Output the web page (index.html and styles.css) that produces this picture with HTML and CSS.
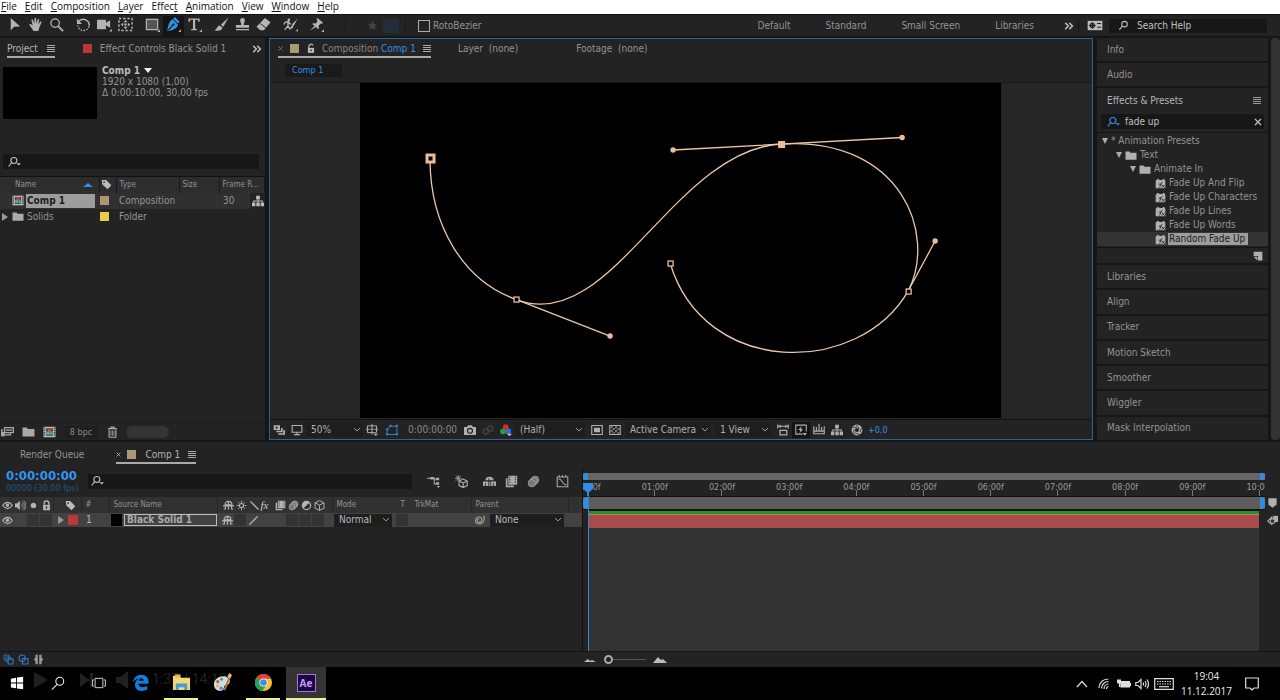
FILE: index.html
```html
<!DOCTYPE html>
<html lang="en">
<head>
<meta charset="utf-8">
<title>Compositor</title>
<link rel="stylesheet" href="styles.css">
</head>
<body>
<svg class="defs" aria-hidden="true">
  <symbol id="arrow" viewBox="0 0 16 16"><path d="M4 1v13.500l3.500-4 6.500-.3z" fill="currentColor"/></symbol>
  <symbol id="hand" viewBox="0 0 16 16"><path d="M6 15 1.500 8.500c-.5-1 1-1.500 1.800-.7L5 9.300 3.700 3.500c-.2-1.200 1.300-1.400 1.600-.3l1.400 4L7 1.800c0-1.200 1.700-1.200 1.700 0l.3 5.400 1.300-4.400c.4-1 1.800-.7 1.600.4L11 8l1.700-2.800c.7-.9 1.900-.2 1.500.8L12 11.500 11 15z" fill="currentColor"/></symbol>
  <symbol id="mag" viewBox="0 0 16 16"><circle cx="6.500" cy="6.500" r="4.500" fill="none" stroke="currentColor" stroke-width="1.400"/><path d="m10 10 5 5" stroke="currentColor" stroke-width="2"/></symbol>
  <symbol id="find" viewBox="0 0 16 16"><circle cx="9.500" cy="6" r="4" fill="none" stroke="currentColor" stroke-width="1.500"/><path d="m6.500 9-4.500 5" stroke="currentColor" stroke-width="1.600"/></symbol>
  <symbol id="findmenu" viewBox="0 0 18 16"><circle cx="7.500" cy="6" r="4" fill="none" stroke="currentColor" stroke-width="1.500"/><path d="m4.500 9-4 5" stroke="currentColor" stroke-width="1.600"/><path d="M11 9.500h6l-3 3z" fill="currentColor"/></symbol>
  <symbol id="rotate" viewBox="0 0 16 16"><path d="M3 4.500C8 0 15 4 14 9.500" fill="none" stroke="currentColor" stroke-width="1.600"/><path d="M14 10c-2 6-11 6-12-1" fill="none" stroke="currentColor" stroke-width="1.500" stroke-dasharray="1.600 1.500"/><path d="M1 1.500v6h5.500z" fill="currentColor"/></symbol>
  <symbol id="camera" viewBox="0 0 16 16"><path d="M0 3h9.500v3L14 3.500v8L9.500 9v4H0z" fill="currentColor"/><path d="M13 15.500h3v-3z" fill="currentColor"/></symbol>
  <symbol id="panbehind" viewBox="0 0 16 16"><rect x="1" y="1.500" width="14" height="13" fill="none" stroke="currentColor" stroke-width="1.600" stroke-dasharray="2.500 2"/><path d="m8 3 2 2.500H6zM8 13l2-2.500H6zM3 8l2.500-2v4zM13 8l-2.500-2v4z" fill="currentColor"/><circle cx="8" cy="8" r="1.300" fill="currentColor"/></symbol>
  <symbol id="rect" viewBox="0 0 16 16"><path d="M1.500 2.500h12v11h-12z" fill="#555" stroke="currentColor" stroke-width="1.300"/><path d="M13 16h3v-3z" fill="currentColor"/></symbol>
  <symbol id="pen" viewBox="0 0 16 16"><path d="m9.500 0 5 5L13 7 7.500 2zM7 2.500 12.700 8c-.5 4-4.500 6-11.200 7C2 9 3.500 4.500 7 2.500z" fill="currentColor"/><path d="M2.500 14 7.500 8.500" stroke="#151515" stroke-width="1.200"/><circle cx="8" cy="8" r="1.200" fill="#151515"/><path d="M13 16h3v-3z" fill="#aaa"/></symbol>
  <symbol id="type" viewBox="0 0 16 16"><path d="M1.500 1.500h12v3.500h-1.300L11.500 3H8.700v9.500l2 .6V14H4.400v-.9l2-.6V3H3.600L3 5H1.500z" fill="currentColor"/><path d="M13 16h3v-3z" fill="currentColor"/></symbol>
  <symbol id="brush" viewBox="0 0 16 16"><path d="m15.500.5-5.500 10L7.300 8.200zM6.200 9l2.800 2.300C8.500 15 4 15.500.5 14c2.700-.5 2.500-4.500 5.700-5z" fill="currentColor"/></symbol>
  <symbol id="stamp" viewBox="0 0 16 16"><path d="M5.500 3.500a2.500 2.500 0 0 1 5 0C10.500 5.500 9.300 6 9.300 8.500H15v3H1v-3h5.700c0-2.500-1.200-3-1.200-5zM1 12.700h14V14H1z" fill="currentColor"/></symbol>
  <symbol id="eraser" viewBox="0 0 16 16"><path d="m9.500 1 6 4.500-7 8.500h-4l-4-3.500z" fill="currentColor"/><path d="m4.500 7 6 4.500" stroke="#232323"/></symbol>
  <symbol id="roto" viewBox="0 0 18 16"><circle cx="7" cy="2.500" r="1.600" fill="currentColor"/><path d="M1 8 2.500 5.500l4-1L9 8M6 5v5l3 4M6 9.500 2 14.500" fill="none" stroke="currentColor" stroke-width="1.600"/><path d="M17.500 1 10.500 8l2 2zM10.500 9l2 1.500C12 13 10 13.500 8 13z" fill="currentColor"/><path d="M15 16h3v-3z" fill="currentColor"/></symbol>
  <symbol id="pin" viewBox="0 0 16 16"><path d="m9 1 6 5-1 1.200-1.500-.4-2.200 2.500.3 2.700-1 .8L3.500 7.500l.8-.8 2.900.2 2-2.600L8 2.500zM5.800 9.500 1 14.500 7 11z" fill="currentColor"/><path d="M13 16h3v-3z" fill="currentColor"/></symbol>
  <symbol id="star" viewBox="0 0 16 16"><path d="m8 1 2 5h5l-4 3.500 1.500 5L8 11.500l-4.500 3 1.500-5L1 6h5z" fill="currentColor"/></symbol>
  <symbol id="burger" viewBox="0 0 8 8"><path d="M0 .5h8M0 2.500h8M0 4.500h8M0 6.500h8" stroke="currentColor"/></symbol>
  <symbol id="more" viewBox="0 0 16 16"><path d="m2 3 5 5-5 5M8.500 3l5 5-5 5" fill="none" stroke="currentColor" stroke-width="2.400"/></symbol>
  <symbol id="close" viewBox="0 0 16 16"><path d="m2 2 12 12M14 2 2 14" stroke="currentColor" stroke-width="2.600"/></symbol>
  <symbol id="panelset" viewBox="0 0 24 16"><path d="M1 1h22v14H1z" fill="currentColor"/><circle cx="8" cy="8" r="3" fill="none" stroke="#232323" stroke-width="2"/><path d="M8 3v10M3 8h10M15 5h6M15 10.500h6" stroke="#232323" stroke-width="1.600"/></symbol>
  <symbol id="lock" viewBox="0 0 16 16"><path d="M4.500 7V5a3.500 3.500 0 0 1 7 0v2" fill="none" stroke="currentColor" stroke-width="2"/><path d="M3 7h10v8H3z" fill="currentColor"/><path d="M8 9.500v3" stroke="#2a2a2a" stroke-width="2"/></symbol>
  <symbol id="unlock" viewBox="0 0 16 16"><path d="M4.500 7V4a3.500 3.500 0 0 1 6.500-1" fill="none" stroke="currentColor" stroke-width="2"/><path d="M3 7h10v8H3z" fill="currentColor"/><path d="M8 9.500v3" stroke="#232323" stroke-width="2"/></symbol>
  <symbol id="tag" viewBox="0 0 16 16"><path d="M1 1.500h6.500L15 9l-5.500 6L2 8z" fill="currentColor"/><circle cx="4.500" cy="4.500" r="1.300" fill="#333"/></symbol>
  <symbol id="folder" viewBox="0 0 16 16"><path d="M0 2h6l1 2h9v10H0z" fill="currentColor"/></symbol>
  <symbol id="compicon" viewBox="0 0 16 16"><path d="M0 1h16v14H0z" fill="#bbb"/><path d="M1.500 2v12M14.500 2v12" stroke="#333" stroke-width="1.500" stroke-dasharray="1.500 1.500"/><path d="M3.500 3h9v10h-9z" fill="#444"/><circle cx="8" cy="6" r="2.500" fill="#d9463b"/><circle cx="6" cy="9.500" r="2.500" fill="#54a0d8"/><circle cx="10.300" cy="9.500" r="2.400" fill="#54a865"/></symbol>
  <symbol id="tree" viewBox="0 0 16 16"><path d="M5.500 1h5v5h-5zM0 10h4.500v5H0zM5.800 10h4.500v5H5.800zM11.500 10H16v5h-4.500z" fill="currentColor"/><path d="M2.300 10V8h11.500v2M8 6v4" fill="none" stroke="currentColor" stroke-width="1.400"/></symbol>
  <symbol id="interpret" viewBox="0 0 18 16"><path d="M5 2h12v7H5zM3 5H1v7h12v-2M7 5.500h8" fill="none" stroke="currentColor" stroke-width="1.800"/><path d="M0 8h5v6H0z" fill="currentColor"/></symbol>
  <symbol id="trash" viewBox="0 0 16 16"><path d="M2 3.500h12M6 3V1.500h4V3M3.500 5v10h9V5" fill="none" stroke="currentColor" stroke-width="1.500"/><path d="M6 6v7M8 6v7M10 6v7" stroke="currentColor"/></symbol>
  <symbol id="preview" viewBox="0 0 18 16"><path d="M1 1h9.500v7H1zM12 5h2.500v6.500H5V9h7zM15.500 8H18v7H8v-2h7.500z" fill="currentColor"/><path d="m4 2.500 4 2-4 2z" fill="#222"/></symbol>
  <symbol id="monitor" viewBox="0 0 16 16"><path d="M1.500 2h13v9h-13zM8 11v3M4 14.200h8" fill="none" stroke="currentColor" stroke-width="1.500"/></symbol>
  <symbol id="grid" viewBox="0 0 16 16"><path d="M2 2.500h12v9H2zM8 0v5M8 9v5M0 7h5M11 7h5M6 7h4M8 5v4" fill="none" stroke="currentColor" stroke-width="1.300"/><path d="M10 13h6l-3 3z" fill="currentColor"/></symbol>
  <symbol id="mask" viewBox="0 0 16 16"><path d="M1.500 14V7L6 3h8.500v11z" fill="none" stroke="currentColor" stroke-width="1.300"/><path d="M0 12h3v3H0zM0 6h3v3H0zM4.500 1h3v3h-3zM13 1h3v3h-3zM13 12h3v3h-3z" fill="currentColor"/></symbol>
  <symbol id="snap" viewBox="0 0 16 16"><path d="M0 4h4l1.500-2.500h5L12 4h4v10.500H0z" fill="currentColor"/><circle cx="8" cy="9" r="3.300" fill="none" stroke="#222" stroke-width="1.600"/></symbol>
  <symbol id="links" viewBox="0 0 16 16"><circle cx="5" cy="10" r="3.500" fill="none" stroke="currentColor" stroke-width="1.800"/><circle cx="11" cy="6" r="3.500" fill="none" stroke="currentColor" stroke-width="1.800"/></symbol>
  <symbol id="rgb" viewBox="0 0 16 16"><circle cx="7.500" cy="4" r="3.800" fill="#e32222"/><circle cx="4" cy="10" r="3.800" fill="#24a52c"/><circle cx="11" cy="9.500" r="3.800" fill="#2f6be0"/><path d="M9 13h7l-3.500 3z" fill="#ccc"/></symbol>
  <symbol id="roi" viewBox="0 0 16 16"><path d="M1 2h14v12H1z" fill="none" stroke="currentColor" stroke-width="1.500"/><path d="M4 5h8v6H4z" fill="currentColor"/></symbol>
  <symbol id="checker" viewBox="0 0 16 16"><path d="M1 2h14v12H1z" fill="none" stroke="currentColor" stroke-width="1.400"/><path d="M2 3h3v2.500H2zM8 3h3v2.500H8zM5 5.500h3v2.500H5zM11 5.500h3v2.500h-3zM2 8h3v3H2zM8 8h3v3H8zM5 11h3v2H5zM11 11h3v2h-3z" fill="currentColor" opacity=".6"/></symbol>
  <symbol id="aspect" viewBox="0 0 16 16"><path d="M1 3h14M1 .5V6M15 .5V6M4 8.500h9v6H4z" fill="none" stroke="currentColor" stroke-width="1.600"/><path d="m2 3 3-2.500v5zM14 3l-3-2.500v5z" fill="currentColor"/></symbol>
  <symbol id="fast" viewBox="0 0 16 16"><path d="M15 10V1.500H1v12h9" fill="none" stroke="currentColor" stroke-width="1.400"/><path d="m9 3-5 5h3l-1 4 5-5H8zM10 12h6l-3 3.500z" fill="currentColor"/></symbol>
  <symbol id="tlbtn" viewBox="0 0 16 16"><path d="M1 3v10h14V3M8 0v9M4.500 4v5M11.500 4v5M1 9.500h14" fill="none" stroke="currentColor" stroke-width="1.500"/></symbol>
  <symbol id="shutter" viewBox="0 0 16 16"><circle cx="8" cy="8" r="5" fill="none" stroke="currentColor" stroke-width="4.500"/><path d="m2 5 6-1M7 1l4 5M14 5l-2 6M12 14l-7-2M4 13 4 7" stroke="#222"/></symbol>
  <symbol id="preset" viewBox="0 0 16 16"><path d="M1 4 4 1l3 2h3l3-2 2 3v11H1z" fill="currentColor"/><path d="M6 14c2 0 2-8 5-8M5.500 9h4M10 10l4 4M14 10l-4 4" fill="none" stroke="#262626" stroke-width="1.300"/></symbol>
  <symbol id="newpage" viewBox="0 0 16 16"><path d="M1 1h14v14H8V8H1z" fill="currentColor"/><path d="M1 9h6v6z" fill="currentColor"/></symbol>
  <symbol id="flow" viewBox="0 0 16 16"><path d="M0 4h5M9 4V11h3M9 5h3" fill="none" stroke="currentColor" stroke-width="1.300"/><path d="M4 2.500h5v3H4zM11 3.500h4v3h-4zM11 9h4v3h-4zM12 13.500h4L14 16z" fill="currentColor"/></symbol>
  <symbol id="cube" viewBox="0 0 16 16"><path d="m8 1 6.500 3v8L8 15l-6.500-3V4zM1.500 4 8 7.500 14.500 4M8 7.500V15" fill="none" stroke="currentColor" stroke-width="1.400"/></symbol>
  <symbol id="draft" viewBox="0 0 16 16"><path d="m10 5 5 2.500v5.500L10 15.500 5 13V7.500zM5 7.500l5 2.500 5-2.500M10 10v5.500" fill="none" stroke="currentColor" stroke-width="1.400"/><path d="M4 0v8M0 4h8M1 1l6 6M7 1 1 7" stroke="currentColor"/></symbol>
  <symbol id="shy" viewBox="0 0 16 16"><path d="M3 7a5 5 0 0 1 10 0zM0 8.500h16M8 3v11M3.500 8v5H1M12.500 8v5H15" fill="none" stroke="currentColor" stroke-width="1.600"/></symbol>
  <symbol id="shyfill" viewBox="0 0 16 16"><path d="M3 6.500a5 4.500 0 0 1 10 0zM0 8h16v5.500H0z" fill="currentColor"/><path d="M7 4v10M9.500 6v8M3 10v4M13 10v4" stroke="#222"/></symbol>
  <symbol id="frames" viewBox="0 0 16 16"><path d="M1 4h2v9h8v2H1zM4 1h11v11H4z" fill="currentColor"/><path d="M6 2v9M13 2v9" stroke="#222" stroke-width="1.200" stroke-dasharray="1.500 1.500"/></symbol>
  <symbol id="blur" viewBox="0 0 16 16"><circle cx="10" cy="6" r="4.500" fill="#777" stroke="currentColor"/><circle cx="8" cy="8" r="4.500" fill="#666" stroke="currentColor"/><circle cx="6" cy="10" r="4.500" fill="#777" stroke="currentColor"/></symbol>
  <symbol id="graph" viewBox="0 0 16 16"><path d="M1.500 2.500h13v12h-13zM4 0v2M8 0v2M12 0v2M3 5c5-1 5 8 10 7" fill="none" stroke="currentColor" stroke-width="1.300"/></symbol>
  <symbol id="eye" viewBox="0 0 16 16"><path d="M1 8c4-6 10-6 14 0-4 6-10 6-14 0z" fill="none" stroke="currentColor" stroke-width="1.600"/><circle cx="8" cy="7.500" r="2.500" fill="currentColor"/></symbol>
  <symbol id="sound" viewBox="0 0 16 16"><path d="M0 5h3l4-4v14l-4-4H0z" fill="currentColor"/><path d="M9 5c2 2 2 4 0 6M10.500 2.500c4 3 4 8 0 11M12.500 1c4.500 4 4.500 10 0 14" fill="none" stroke="currentColor" stroke-width="1.200"/></symbol>
  <symbol id="dot" viewBox="0 0 16 16"><circle cx="8" cy="8" r="4" fill="currentColor"/></symbol>
  <symbol id="sun" viewBox="0 0 16 16"><circle cx="8" cy="8" r="3" fill="none" stroke="currentColor" stroke-width="1.500"/><path d="M8 1v3M8 12v3M1 8h3M12 8h3M3 3l2 2M11 11l2 2M13 3l-2 2M5 11l-2 2" stroke="currentColor" stroke-width="1.300"/></symbol>
  <symbol id="back" viewBox="0 0 16 16"><path d="m2 2 12 12" stroke="currentColor" stroke-width="2"/></symbol>
  <symbol id="slash" viewBox="0 0 16 16"><path d="M14 2 2 14" stroke="currentColor" stroke-width="2"/></symbol>
  <symbol id="half" viewBox="0 0 16 16"><circle cx="8" cy="8" r="6" fill="none" stroke="currentColor" stroke-width="1.800"/><path d="M12.500 3.500A6 6 0 0 0 3.500 12z" fill="currentColor"/></symbol>
  <symbol id="whip" viewBox="0 0 16 16"><path d="M14 1c2 5 0 12-6 12C2 13 1 8 3 5s8-3 8.500 1-3 6-5.500 4-1-4.500 1.500-4" fill="none" stroke="currentColor" stroke-width="1.500"/></symbol>
  <symbol id="stack" viewBox="0 0 16 16"><path d="M1.500 1.500h7v7h-7zM4.500 4.500h7v7h-7z" fill="none" stroke="currentColor" stroke-width="1.300"/><path d="M7.500 7.500h7v7h-7z" fill="#232323" stroke="currentColor" stroke-width="1.600"/></symbol>
  <symbol id="stack2" viewBox="0 0 16 16"><circle cx="6" cy="6" r="4.500" fill="none" stroke="currentColor" stroke-width="1.600"/><path d="M6.500 6.500h8v8h-8z" fill="none" stroke="currentColor" stroke-width="1.600"/></symbol>
  <symbol id="braces" viewBox="0 0 16 16"><path d="M7 1H3.500v4.500L1 8l2.500 2.500V15H7zM9 1h3.500v4.500L15 8l-2.500 2.500V15H9z" fill="currentColor"/></symbol>
  <symbol id="marker" viewBox="0 0 16 16"><path d="M2 1h12v9l-6 5-6-5z" fill="currentColor"/></symbol>
  <symbol id="compbtn" viewBox="0 0 16 16"><path d="M9 2h7v9H9z" fill="currentColor"/><path d="m1 9.500 6-6v11z" fill="none" stroke="currentColor" stroke-width="1.500"/><circle cx="8" cy="9.500" r="3.500" fill="#333" stroke="currentColor" stroke-width="1.500"/></symbol>
</svg>
<div class="app">
  <nav class="menubar" aria-label="Main menu">
    <a href="#"><u>F</u>ile</a><a href="#"><u>E</u>dit</a><a href="#"><u>C</u>omposition</a><a href="#"><u>L</u>ayer</a><a href="#">Effec<u>t</u></a><a href="#"><u>A</u>nimation</a><a href="#"><u>V</u>iew</a><a href="#"><u>W</u>indow</a><a href="#"><u>H</u>elp</a>
  </nav>

  <header class="toolbar">
    <div class="tools">
      <button aria-label="Selection"><svg><use href="#arrow"/></svg></button><button aria-label="Hand"><svg><use href="#hand"/></svg></button><button aria-label="Zoom"><svg><use href="#mag"/></svg></button>
    </div>
    <div class="tools">
      <button aria-label="Rotation"><svg><use href="#rotate"/></svg></button><button aria-label="Camera"><svg><use href="#camera"/></svg></button><button aria-label="Pan behind"><svg><use href="#panbehind"/></svg></button>
    </div>
    <div class="tools">
      <button aria-label="Rectangle"><svg><use href="#rect"/></svg></button><button class="active" aria-label="Pen"><svg><use href="#pen"/></svg></button><button aria-label="Type"><svg><use href="#type"/></svg></button>
    </div>
    <div class="tools">
      <button aria-label="Brush"><svg><use href="#brush"/></svg></button><button aria-label="Clone stamp"><svg><use href="#stamp"/></svg></button><button aria-label="Eraser"><svg><use href="#eraser"/></svg></button>
    </div>
    <div class="tools spaced">
      <button aria-label="Roto brush"><svg><use href="#roto"/></svg></button><button aria-label="Puppet pin"><svg><use href="#pin"/></svg></button>
    </div>
    <div class="tool-options">
      <button class="dim" aria-label="Star"><svg><use href="#star"/></svg></button><button class="bluebox" aria-label="Mask mode"></button>
    </div>
    <label class="check"><input type="checkbox">RotoBezier</label>
    <div class="workspaces">
      <button>Default</button><button>Standard</button><button>Small Screen</button><button>Libraries</button>
      <button class="more" aria-label="More workspaces"><svg><use href="#more"/></svg></button>
    </div>
    <button class="panelset" aria-label="Workspace settings"><svg><use href="#panelset"/></svg></button>
    <label class="help"><svg><use href="#find"/></svg><input type="text" placeholder="Search Help" aria-label="Search Help"></label>
  </header>

  <main class="workspace">
    <section class="project panel">
      <div class="tabs">
        <div class="tab on">Project<svg class="burger"><use href="#burger"/></svg></div>
        <div class="tab fx"><i class="swatch red"></i>Effect Controls Black Solid 1</div>
        <svg class="more"><use href="#more"/></svg>
      </div>
      <div class="summary">
        <div class="thumb"></div>
        <div class="meta"><b>Comp 1 <i class="down"></i></b><span>1920 x 1080 (1,00)</span><span>Δ 0:00:10:00, 30,00 fps</span></div>
      </div>
      <label class="search"><svg><use href="#findmenu"/></svg><input type="text" aria-label="Search project"></label>
      <table class="files">
        <colgroup><col class="f-name"><col class="f-label"><col class="f-type"><col class="f-size"><col class="f-rate"><col></colgroup>
        <thead><tr><th><span class="name-head">Name<i class="sort"></i></span></th><th><svg><use href="#tag"/></svg></th><th>Type</th><th>Size</th><th colspan="2">Frame R...</th></tr></thead>
        <tbody>
          <tr class="picked"><td><span class="file"><i class="twist none"></i><svg><use href="#compicon"/></svg><b>Comp 1</b></span></td><td><i class="swatch peach"></i></td><td>Composition</td><td></td><td>30</td><td class="net"><svg><use href="#tree"/></svg></td></tr>
          <tr><td><span class="file"><i class="twist"></i><svg><use href="#folder"/></svg>Solids</span></td><td><i class="swatch yellow"></i></td><td>Folder</td><td></td><td></td><td></td></tr>
        </tbody>
      </table>
      <footer class="project-foot">
        <button aria-label="Interpret footage"><svg><use href="#interpret"/></svg></button><button aria-label="New folder"><svg><use href="#folder"/></svg></button><button aria-label="New composition"><svg><use href="#compicon"/></svg></button><button class="bpc">8 bpc</button><button aria-label="Delete"><svg><use href="#trash"/></svg></button><span class="scroll"></span>
      </footer>
    </section>

    <section class="viewer panel">
      <div class="tabs">
        <div class="tab on"><svg class="x"><use href="#close"/></svg><i class="swatch tan"></i><svg class="padlock"><use href="#unlock"/></svg>Composition <em>Comp 1</em><svg class="burger"><use href="#burger"/></svg></div>
        <div class="tab">Layer&nbsp; (none)</div>
        <div class="tab foot">Footage&nbsp; (none)</div>
      </div>
      <div class="crumbs"><button>Comp 1</button></div>
      <div class="stage">
        <svg class="canvas" viewBox="360 83 641 335" role="img" aria-label="Mask path">
          <rect x="360" y="83" width="641" height="335"/>
          <g class="path">
            <path d="M430 159C430 225 463 281 516.500 299.500C610 336 673 150 781 144C902 137 937 235 908 291C858 377 704 377 670 263"/>
            <path d="M516.500 299.500 610 336M673 150 902 137.500M908 291 935 241"/>
          </g>
          <g class="dots"><circle cx="610" cy="336" r="2.700"/><circle cx="673" cy="150" r="2.700"/><circle cx="902" cy="137.500" r="2.700"/><circle cx="935" cy="241" r="2.700"/><rect x="778" y="141" width="7" height="7"/></g>
          <g class="nodes"><rect x="427" y="155" width="7" height="7" class="first"/><rect x="514" y="297" width="5" height="5"/><rect x="906" y="289" width="5" height="5"/><rect x="668" y="261" width="5" height="5"/></g>
        </svg>
      </div>
      <footer class="viewbar">
        <button aria-label="Always preview"><svg><use href="#preview"/></svg></button>
        <button aria-label="Primary viewer"><svg><use href="#monitor"/></svg></button>
        <select class="zoom" aria-label="Magnification"><option>50%</option></select>
        <button aria-label="Grid options"><svg><use href="#grid"/></svg></button>
        <button class="blue gap" aria-label="Mask visibility"><svg><use href="#mask"/></svg></button>
        <button class="time">0:00:00:00</button>
        <button aria-label="Snapshot"><svg><use href="#snap"/></svg></button>
        <button class="dim" aria-label="Show snapshot"><svg><use href="#links"/></svg></button>
        <button aria-label="Channels"><svg><use href="#rgb"/></svg></button>
        <select class="res" aria-label="Resolution"><option>(Half)</option></select>
        <button aria-label="Region of interest"><svg><use href="#roi"/></svg></button>
        <button aria-label="Transparency grid"><svg><use href="#checker"/></svg></button>
        <select class="cam" aria-label="3D view"><option>Active Camera</option></select>
        <select class="views" aria-label="View layout"><option>1 View</option></select>
        <button aria-label="Pixel aspect"><svg><use href="#aspect"/></svg></button>
        <button class="active" aria-label="Fast previews"><svg><use href="#fast"/></svg></button>
        <button aria-label="Timeline"><svg><use href="#tlbtn"/></svg></button>
        <button aria-label="Flowchart"><svg><use href="#tree"/></svg></button>
        <button class="gap" aria-label="Reset exposure"><svg><use href="#shutter"/></svg></button>
        <a class="exposure" href="#">+0,0</a>
      </footer>
    </section>

    <aside class="side">
      <div class="stackpanels">
        <button class="head">Info</button>
        <button class="head">Audio</button>
        <section class="presets">
          <div class="title">Effects &amp; Presets<svg><use href="#burger"/></svg></div>
          <label class="search"><svg><use href="#findmenu"/></svg><input type="text" value="fade up" aria-label="Search effects"><svg class="x"><use href="#close"/></svg></label>
          <ul class="treelist">
            <li><i class="open"></i>* Animation Presets</li>
            <li class="l2"><i class="open"></i><svg><use href="#folder"/></svg>Text</li>
            <li class="l3"><i class="open"></i><svg><use href="#folder"/></svg>Animate In</li>
            <li class="l4"><svg><use href="#preset"/></svg>Fade Up And Flip</li>
            <li class="l4"><svg><use href="#preset"/></svg>Fade Up Characters</li>
            <li class="l4"><svg><use href="#preset"/></svg>Fade Up Lines</li>
            <li class="l4"><svg><use href="#preset"/></svg>Fade Up Words</li>
            <li class="l4 sel"><svg><use href="#preset"/></svg><span>Random Fade Up</span></li>
          </ul>
          <div class="newrow"><svg><use href="#newpage"/></svg></div>
        </section>
        <button class="head grow">Libraries</button>
        <button class="head grow">Align</button>
        <button class="head grow">Tracker</button>
        <button class="head grow">Motion Sketch</button>
        <button class="head grow">Smoother</button>
        <button class="head grow">Wiggler</button>
        <button class="head grow">Mask Interpolation</button>
      </div>
      <div class="scrollbar"></div>
    </aside>
  </main>

  <section class="timeline">
    <div class="tabs">
      <div class="tab queue">Render Queue</div>
      <div class="tab on"><svg class="x"><use href="#close"/></svg><i class="swatch tan"></i>Comp 1<svg class="burger"><use href="#burger"/></svg></div>
    </div>
    <div class="tl-body">
      <div class="layers">
        <div class="tl-top">
          <div class="clock"><b>0:00:00:00</b><small>00000 (30.00 fps)</small></div>
          <label class="search"><svg><use href="#findmenu"/></svg><input type="text" aria-label="Search layers"></label>
          <div class="switchbar">
            <button aria-label="Mini-flowchart"><svg><use href="#flow"/></svg></button><button aria-label="Draft 3D"><svg><use href="#draft"/></svg></button><button aria-label="Hide shy"><svg><use href="#shyfill"/></svg></button><button aria-label="Frame blending"><svg><use href="#frames"/></svg></button><button aria-label="Motion blur"><svg><use href="#blur"/></svg></button><button aria-label="Graph editor"><svg><use href="#graph"/></svg></button>
          </div>
        </div>
        <table class="layer-table">
          <colgroup><col class="c-av"><col class="c-label"><col class="c-num"><col class="c-src"><col class="c-sw"><col class="c-mode"><col class="c-t"><col class="c-trk"><col class="c-parent"><col></colgroup>
          <thead><tr>
            <th><span class="icons"><svg><use href="#eye"/></svg><svg><use href="#sound"/></svg><svg><use href="#dot"/></svg><svg><use href="#lock"/></svg></span></th>
            <th class="mid"><svg><use href="#tag"/></svg></th><th>#</th><th>Source Name</th>
            <th><span class="icons"><svg><use href="#shy"/></svg><svg><use href="#sun"/></svg><svg><use href="#back"/></svg><i class="fxi">fx</i><svg><use href="#frames"/></svg><svg><use href="#blur"/></svg><svg><use href="#half"/></svg><svg><use href="#cube"/></svg></span></th>
            <th>Mode</th><th>T</th><th>TrkMat</th><th>Parent</th><th></th>
          </tr></thead>
          <tbody><tr>
            <td><span class="icons"><svg><use href="#eye"/></svg><s class="void"></s><s></s><s></s></span></td>
            <td><span class="lab"><i class="twist"></i><i class="swatch red"></i></span></td><td class="num">1</td>
            <td><span class="src"><i></i><b>Black Solid 1</b></span></td>
            <td><span class="icons"><svg><use href="#shy"/></svg><s></s><svg><use href="#slash"/></svg><s class="void"></s><s class="void"></s><s></s><s></s><s></s></span></td>
            <td><select class="blend" aria-label="Mode"><option>Normal</option></select></td><td><s></s></td><td></td>
            <td><span class="par"><svg><use href="#whip"/></svg><select class="parent" aria-label="Parent"><option>None</option></select></span></td><td></td>
          </tr></tbody>
        </table>
      </div>
      <div class="tracks">
        <div class="navigator"><i></i><i></i></div>
        <div class="ruler"><div class="ticks"><span>00:00f</span><span>01:00f</span><span>02:00f</span><span>03:00f</span><span>04:00f</span><span>05:00f</span><span>06:00f</span><span>07:00f</span><span>08:00f</span><span>09:00f</span><span>10:00f</span></div></div>
        <div class="workarea"><i></i><i></i></div>
        <div class="cache"></div>
        <div class="bar"></div>
        <div class="empty"></div>
        <svg class="playhead" viewBox="0 0 12 12"><path d="M1 1h10v6l-5 4-5-4z"/></svg>
        <div class="needle"></div>
      </div>
      <div class="gutter"><svg><use href="#marker"/></svg><svg><use href="#compbtn"/></svg></div>
    </div>
    <footer class="tl-foot">
      <div class="toggles"><svg><use href="#stack"/></svg><svg><use href="#stack2"/></svg><svg class="grey"><use href="#braces"/></svg></div>
      <div class="tl-zoom"><svg viewBox="0 0 16 8"><path d="m2 6 4-3 2 2 2-1 4 2z"/></svg><input type="range" min="0" max="100" value="0" aria-label="Timeline zoom"><svg class="big" viewBox="0 0 16 8"><path d="m1 7 5-6 3 3 2-1 4 4z"/></svg></div>
    </footer>
  </section>

  <footer class="taskbar">
    <div class="ghost" aria-hidden="true"><svg viewBox="0 0 100 20"><path d="M0 2v16l14-8zM46 3v14l10-7zM56 3h3v14h-3zM82 7h4l8-6v18l-8-6h-4z"/></svg><span>1:37 / 14:18</span></div>
    <button class="app-btn" aria-label="Start"><svg viewBox="0 0 16 16"><path d="m1 3 6-1v5.500H1zM8 1.800 15 .8v6.700H8zM1 8.500h6V14l-6-1zM8 8.500h7v6.700l-7-1z" fill="#fff"/></svg></button>
    <button class="app-btn" aria-label="Search"><svg viewBox="0 0 16 16"><circle cx="10" cy="6" r="4.500" fill="none" stroke="#eee" stroke-width="1.200"/><path d="m7 9.500-6 6" stroke="#eee" stroke-width="1.300"/></svg></button>
    <button class="app-btn" aria-label="Task view"><svg viewBox="0 0 18 16"><path d="M4 2h10v12H4zM2.500 4H.8v8h1.700M15.500 4h1.700v8h-1.700" fill="none" stroke="#ddd" stroke-width="1.200"/></svg></button>
    <button class="app-btn edge" aria-label="Edge"><svg viewBox="0 0 20 20"><path d="M1 10C2 4 6 1 11 1c6 0 9 4 8.500 10.500H7.500c.5 4.500 6.500 5 10.500 2.700v4C12 21.500 3.500 20 3.500 12.500c0-3.500 2-6 5-7.300C4.500 5.500 2 8 1 10zm6.700-2h6.100c0-4-5.600-4-6.100 0z" fill="#0f7fdc"/></svg></button>
    <button class="app-btn large open" aria-label="File Explorer"><svg viewBox="0 0 20 20"><path d="M1 3h7l1.500 2H19v13H1z" fill="#f7d774"/><path d="M3 1.500h6V5H3z" fill="#e6b94f"/><path d="M4 11h12v7h-3v-3H7v3H4z" fill="#3f9fd8"/></svg></button>
    <button class="app-btn large" aria-label="Paint"><svg viewBox="0 0 20 20"><path d="M1 12C1 6 8 2 14 4c6 3 4 8 0 9-3 0-2 2-3 4-2 3-10 2-10-5z" fill="#cddce4"/><circle cx="5" cy="9" r="1.700" fill="#d6483e"/><circle cx="9" cy="6.500" r="1.600" fill="#57a847"/><circle cx="5" cy="13.500" r="1.700" fill="#e9b740"/><circle cx="8.500" cy="16" r="1.500" fill="#3b83ce"/><path d="m18 3-6 15" stroke="#b87433" stroke-width="2"/><path d="m17 0 3 2-2 4-3-2z" fill="#e0b77c"/></svg></button>
    <button class="app-btn large open" aria-label="Chrome"><svg viewBox="0 0 20 20"><circle cx="10" cy="10" r="9" fill="#f4c430"/><path d="M10 10 2.200 5.500A9 9 0 0 1 18 6H10z" fill="#dc4437"/><path d="M2.200 5.500A9 9 0 0 0 9 19l4-7-3-2z" fill="#23a05a"/><circle cx="10" cy="10" r="4.300" fill="#fff"/><circle cx="10" cy="10" r="3.500" fill="#4286f0"/></svg></button>
    <button class="app-btn current" aria-label="After Effects"><span>Ae</span></button>
    <div class="tray">
      <svg class="t-chev" viewBox="0 0 12 12"><path d="m1 9 5-5.500L11 9"/></svg>
      <svg class="t-net" viewBox="0 0 12 12"><path d="M1 10C1 4.500 5 1 10.500 1M3.500 10.500c0-4 3-7 7-7M6 11c0-3 2-5 4.500-5M8.500 11c0-1.500 1-2.500 2-2.500"/></svg>
      <svg class="t-bat" viewBox="0 0 14 12"><path d="M4 3.500h8.500V9H4zM1 2v3h3M2.500 5v4" /><path d="M4 4h8v5H4zM0 1.500h4V5H0zM12 5h2v3h-2z" class="solid"/></svg>
      <svg class="t-vol" viewBox="0 0 14 12"><path d="M.8 4.500H3L6 1.500v9L3 7.500H.8zM8 4.500q1 1.500 0 3M10 3q2 3 0 6M12 1.500q3 4.500 0 9"/></svg>
      <svg class="t-key" viewBox="0 0 20 12"><path d="M.7.700h18.600v10.600H.7z"/><path d="M3 3.500h14M3 6h14" stroke-dasharray="1.500 1"/><path d="M5 8.700h10"/></svg>
      <time>19:04<br>11.12.2017</time>
      <svg class="t-note" viewBox="0 0 14 14"><path d="M.7 1h12.600v10H9L7 13l-2-2H.7z"/></svg>
    </div>
  </footer>
</div>
</body>
</html>
```
FILE: styles.css
```css
* { box-sizing: border-box; }
:root {
  --bg: #232323;
  --edge: #161616;
  --field: #171717;
  --text: #939393;
  --bright: #c0c0c0;
  --blue: #3190e8;
}
body {
  margin: 0;
  background: #000;
  color: var(--text);
  font: 10px/12px "DejaVu Sans Condensed", "DejaVu Sans", sans-serif;
}
button, input, select {
  margin: 0;
  padding: 0;
  border: 0;
  background: none;
  color: inherit;
  font: inherit;
}
input:focus { outline: none; }
a { color: inherit; text-decoration: none; }
em, i { font-style: normal; }
svg { display: block; flex: none; }
.defs { position: absolute; width: 0; height: 0; }
.app { display: flex; flex-direction: column; min-height: 100vh; }

.menubar {
  display: flex;
  gap: 8px;
  height: 14px;
  padding-left: 1px;
  background: #fff;
  color: #111;
  font: 10px/12px "Open Sans", "Noto Sans", sans-serif;
}
.menubar u { text-underline-offset: 1px; }

/* Toolbar */
.toolbar {
  display: flex;
  align-items: center;
  height: 22px;
  padding-left: 4px;
  background: var(--bg);
  border-top: 1px solid #111;
}
.tools { display: flex; margin-right: 6px; color: #b4b4b4; }
.tools.spaced { gap: 5px; margin-right: 18px; }
.tools button { display: grid; place-items: center; width: 21px; height: 20px; padding-bottom: 2px; }
.tools svg { width: 15px; height: 15px; }
.tools .active { background: #141414; color: var(--blue); }
.tool-options { display: flex; align-items: center; gap: 5px; padding: 0 6px 0 21px; border-left: 1px solid #1a1a1a; border-right: 1px solid #1a1a1a; }
.tool-options svg { width: 11px; height: 11px; }
.dim { color: #454545; }
.bluebox { width: 16px; height: 14px; background: #232c3b; }
.check { display: flex; align-items: center; gap: 3px; margin-left: 12px; }
.check input { appearance: none; width: 12px; height: 12px; border: 1px solid #aaa; }
.workspaces { display: flex; align-items: center; gap: 35px; margin-left: auto; padding-right: 4px; border-right: 1px solid #161616; }
.workspaces .more { color: #bbb; margin-left: -5px; }
.more svg, svg.more { width: 10px; height: 10px; }
.panelset { padding: 0 6px 0 8px; color: #bbb; }
.panelset svg { width: 16px; height: 11px; }
.help { display: flex; align-items: center; gap: 8px; width: 158px; height: 14px; margin-right: 13px; padding-left: 9px; background: var(--field); color: var(--bright); }
.help svg { width: 11px; height: 11px; }
.help input { flex: 1; min-width: 0; }
.help input::placeholder { color: var(--bright); opacity: 1; }

/* Panels */
.workspace { display: flex; gap: 4px; background: var(--edge); padding-top: 2px; border-bottom: 2px solid var(--edge); }
.panel { display: flex; flex-direction: column; background: var(--bg); }
.tabs { display: flex; align-items: flex-start; }
.tab { display: flex; align-items: center; height: 20px; padding: 3px 0 2px; white-space: pre; }
.tab.on { padding-bottom: 0; border-bottom: 2px solid #aaa; color: #b4b4b4; }
.burger { width: 8px; height: 8px; margin-left: 9px; color: #aaa; }
.swatch { display: block; width: 9px; height: 9px; flex: none; }
.red { background: #b8383c; }
.tan { background: #a99a74; }
.peach { background: #b29475; }
.yellow { background: #e5cf46; }
.x { width: 5px; height: 5px; }
.search { display: flex; align-items: center; height: 15px; background: var(--field); color: var(--bright); }
.search svg { width: 14px; height: 12px; }
.search input { flex: 1; min-width: 0; margin-left: 4px; }

/* Project */
.project { width: 265px; }
.project .tab.on { margin-left: 7px; }
.project .fx { gap: 8px; margin-left: 28px; }
.project svg.more { margin: 6px 3px 0 auto; color: #bbb; }
.summary { display: flex; gap: 5px; padding: 7px 3px 0; }
.thumb { width: 94px; height: 52px; margin-top: 2px; background: #000; }
.meta { display: flex; flex-direction: column; line-height: 11px; }
.meta b { color: #bbb; display: flex; align-items: center; gap: 4px; }
.down, .open:not(button), .sort, .twist { display: block; width: 0; height: 0; }
.down { border: 4px solid transparent; border-top: 5px solid #eee; border-bottom: 0; }
.project .search { margin: 35px 6px 7px 3px; padding-left: 5px; }
.files { width: 100%; table-layout: fixed; border-collapse: collapse; text-align: left; }
.f-name { width: 99px; }
.f-label { width: 17px; }
.f-type { width: 63px; }
.f-size { width: 40px; }
.f-rate { width: 31px; }
.files th, .files td { padding: 0; height: 16px; font-weight: normal; white-space: nowrap; }
.files th { font-size: 8px; background: #2d2d2d; border-right: 1px solid #191919; padding-left: 3px; }
.files thead { border-top: 1px solid #111; }
.files th svg { width: 11px; height: 11px; margin-left: -2px; color: #bbb; }
.files td:nth-child(2) { padding-left: 1px; }
.files td:nth-child(3) { padding-left: 3px; }
.files td:nth-child(5) { padding-left: 4px; }
.name-head { display: flex; align-items: center; justify-content: space-between; padding: 0 6px 0 12px; }
.sort { border: 5px solid transparent; border-bottom: 4px solid var(--blue); border-top: 0; }
.picked td { background: #303030; }
.picked td.net { background: var(--bg); color: #bbb; }
.net svg { width: 12px; height: 12px; margin-left: 2px; }
.file { display: flex; align-items: center; gap: 3px; }
.file svg { width: 12px; height: 11px; color: #aaa; }
.file b { flex: 1; margin: 1px 4px 1px -1px; padding-left: 1px; background: #9d9d9d; color: #202020; line-height: 14px; }
.twist { border: 4px solid transparent; border-left: 6px solid #999; border-right: 0; margin-left: 3px; flex: none; }
.file .twist { margin-left: 2px; margin-right: 1px; }
.twist.none { border-left-color: transparent; }
.project-foot { display: flex; align-items: center; height: 18px; margin-top: auto; border-top: 1px solid #1b1b1b; color: #aaa; }
.project-foot button { padding-left: 1px; margin-right: 7px; }
.project-foot svg { width: 13px; height: 12px; }
.project-foot .bpc { width: 35px; font-size: 9px; color: #888; background: #1f1f1f; }
.scroll { width: 43px; height: 12px; border-radius: 6px; background: #343434; }

/* Composition viewer */
.viewer { flex: 1; min-width: 0; border: 1px solid #2b6594; }
.viewer .tabs { height: 25px; padding-left: 8px; }
.viewer .tab { height: 19px; padding-top: 2px; }
.viewer .tab.on { color: #888; }
.viewer .tab.on em { color: var(--blue); }
.viewer .x { margin-right: 7px; }
.viewer .burger { margin-left: 7px; }
.padlock { width: 10px; height: 11px; margin: 0 6px 0 7px; color: #bbb; }
.viewer .tab + .tab { margin-left: 27px; }
.viewer .tab.foot { margin-left: 58px; }
.crumbs { height: 19px; padding-left: 15px; border-bottom: 1px solid #181818; }
.crumbs button { display: block; width: 57px; height: 13px; padding-left: 7px; text-align: left; line-height: 13px; font-size: 9px; background: #1a1a1a; color: var(--blue); }
.stage { flex: 1; display: flex; justify-content: center; background: #262626; }
.canvas { width: 78%; height: auto; aspect-ratio: 641 / 335; }
.path { fill: none; stroke: #ebc8a8; stroke-width: 1.300; }
.dots { fill: #ebbc9b; }
.nodes rect { fill: #000; stroke: #ebbc9b; stroke-width: 1.300; }
.nodes .first { stroke-width: 3; }
.viewbar { display: flex; align-items: center; height: 20px; margin-top: 1px; border-top: 1px solid #151515; color: #b0b0b0; }
.viewbar button { display: grid; place-items: center; width: 18px; height: 16px; }
.viewbar svg { width: 12px; height: 12px; }
.viewbar .gap { margin-left: 2px; }
.viewbar .blue { color: #367fc0; }
.viewbar .dim { color: #454545; }
.viewbar .active { background: #141414; }
.viewbar .time { width: 57px; margin-left: 3px; color: #888; }
select {
  appearance: none;
  height: 15px;
  padding-left: 5px;
  background: #1e1e1e url("data:image/svg+xml,%3Csvg xmlns='http://www.w3.org/2000/svg' width='8' height='6'%3E%3Cpath d='m1 1 3 3 3-3' fill='none' stroke='%23999'/%3E%3C/svg%3E") no-repeat right 2px center;
}
.zoom { width: 57px; }
.res { width: 70px; margin-right: 3px; }
.cam { width: 86px; margin: 0 4px 0 1px; }
.views { width: 56px; margin-right: 3px; }
.exposure { margin-left: 2px; color: var(--blue); font-size: 9px; }

/* Side panels */
.side { display: flex; width: 183px; }
.stackpanels { display: flex; flex-direction: column; flex: 1; gap: 2px; }
.scrollbar { width: 9px; margin-left: 3px; border-radius: 4px; background: #333; }
.head { min-height: 23px; padding-left: 10px; background: var(--bg); text-align: left; }
.grow { flex: 1; }
.presets { background: var(--bg); }
.title { display: flex; align-items: center; justify-content: space-between; height: 25px; padding: 0 7px 0 10px; color: #b4b4b4; }
.title svg { width: 8px; height: 8px; margin: 0; color: #999; }
.presets .search { margin: 1px 4px 3px; padding: 0 2px 0 6px; }
.presets .search > svg:first-child { color: var(--blue); }
.presets .search .x { width: 8px; height: 8px; }
.treelist { margin: 0; padding: 1px 0; list-style: none; border: solid #131313; border-width: 1px 0; }
.treelist li { display: flex; align-items: center; gap: 3px; height: 14px; padding-left: 5px; white-space: nowrap; }
.treelist svg { width: 12px; height: 11px; color: #b0b0b0; }
.treelist .open { border: 3px solid transparent; border-top: 6px solid #aaa; border-bottom: 0; }
.treelist .l2 { padding-left: 19px; }
.treelist .l3 { padding-left: 33px; }
.treelist .l4 { padding-left: 58px; }
.treelist .l4 svg { width: 11px; }
.treelist .sel { background: #333; }
.sel span { margin-left: -1px; padding: 0 3px 0 1px; background: #9d9d9d; color: #1b1b1b; }
.newrow { display: flex; justify-content: flex-end; align-items: center; height: 15px; padding-right: 5px; color: #b0b0b0; }
.newrow svg { width: 10px; height: 10px; }

/* Timeline */
.timeline { display: flex; flex-direction: column; flex: 1; background: var(--bg); padding-top: 2px; }
.timeline .tabs { height: 24px; gap: 32px; }
.queue { padding-left: 20px; }
.timeline .tab .swatch { margin: 0 9px 0 6px; }
.timeline .burger { margin-left: 8px; }
.tl-body { display: flex; flex: 1; }
.layers { width: 582px; }
.tl-top { display: flex; align-items: center; height: 29px; padding: 0 0 3px 6px; }
.clock { width: 82px; }
.clock b { display: block; font-size: 13px; line-height: 14px; color: #3495f0; }
.clock small { display: block; font-size: 9px; line-height: 11px; color: #215381; }
.tl-top .search { width: 324px; padding-left: 3px; }
.switchbar { display: flex; margin-left: 7px; color: #aaa; }
.switchbar button { width: 22px; margin-left: 6px; }
.switchbar button:first-child { margin-left: 3px; }
.switchbar button:nth-child(n+4) { margin-left: 0; }
.switchbar button:last-child { margin-left: 7px; }
.switchbar svg { width: 13px; height: 13px; margin: auto; }
.layer-table { width: 100%; table-layout: fixed; border-collapse: collapse; text-align: left; }
.c-av { width: 53px; }
.c-label { width: 28px; }
.c-num { width: 28px; }
.c-src { width: 108px; }
.c-sw { width: 115px; }
.c-mode { width: 64px; }
.c-t { width: 14px; }
.c-trk { width: 61px; }
.c-parent { width: 97px; }
.layer-table th, .layer-table td { padding: 0; overflow: hidden; white-space: nowrap; }
.layer-table th { height: 16px; padding-left: 4px; font-size: 8px; font-weight: normal; background: #313131; border-left: 1px solid #262626; }
.layer-table th:nth-child(7), .layer-table th:nth-child(8) { border-left-color: #313131; }
.layer-table th:first-child { padding-left: 0; border-left: 0; }
.layer-table td { height: 14px; background: #424242; }
.icons { display: flex; align-items: center; padding-left: 1px; }
.icons svg { width: 11px; height: 11px; margin: 0 1px; color: #b4b4b4; }
td:nth-child(5) .icons { padding-left: 4px; }
th:nth-child(5) .icons { padding-left: 0; }
.fxi { width: 13px; font: italic 11px/12px "Liberation Serif", serif; color: #ccc; }
s { display: block; width: 12px; height: 12px; margin-right: 1px; background: #333; }
s.void { background: none; }
.mid svg { width: 11px; height: 11px; margin-left: 7px; color: #bbb; }
.lab { display: flex; align-items: center; gap: 4px; padding-left: 2px; }
.lab .swatch { width: 10px; height: 10px; }
td.num { padding-left: 5px; color: #bbb; }
.src { display: flex; gap: 2px; height: 12px; padding-left: 2px; }
.src i { width: 11px; background: #000; }
.src b { flex: 1; padding-left: 2px; border: 1px solid #bbb; line-height: 10px; color: #aaa; }
.layer-table select { display: block; height: 13px; color: #bbb; }
.blend { width: 58px; margin-left: 2px; }
.par { display: flex; align-items: center; gap: 5px; padding-left: 3px; }
.par svg { width: 11px; height: 11px; color: #aaa; }
.parent { width: 74px; }
.tracks { position: relative; display: flex; flex-direction: column; flex: 1; min-width: 0; border-left: 1px solid #111; }
.navigator, .workarea { display: flex; justify-content: space-between; background: #666; }
.navigator { height: 8px; margin-top: 4px; border-top: 1px solid #222; }
.workarea { height: 14px; background: #5c5c5c; border: solid #111; border-width: 1px 0; }
.tracks i { width: 5px; background: #328de0; border-radius: 4px 0 0 4px; }
.tracks i + i { border-radius: 0 4px 4px 0; }
.ruler { height: 16px; overflow: hidden; color: #9c9c9c; font-size: 9px; }
.ticks { display: flex; margin: 0 -28px 0 -29px; line-height: 15px; }
.ticks span { flex: 1; height: 16px; text-align: center; background: linear-gradient(#777, #777) no-repeat center bottom / 1px 6px; }
.cache { height: 4px; margin: 0 6px 0 5px; background: #249326; border-top: 1px solid #111; }
.bar { height: 14px; margin: 0 6px 0 5px; background: #a94a4b; border-top: 1px solid #c07c74; }
.empty { flex: 1; margin: 0 6px 0 5px; background: #333; }
.playhead { position: absolute; left: -1px; top: 14px; width: 12px; height: 12px; fill: #318fe8; }
.needle { position: absolute; left: 5px; top: 24px; bottom: 0; width: 1px; background: #3085d4; }
.gutter { width: 15px; padding-top: 29px; color: #b0b0b0; }
.gutter svg { width: 11px; height: 12px; margin: 0 0 5px 2px; }
.tl-foot { display: flex; align-items: center; height: 16px; border-top: 1px solid #141414; }
.toggles { display: flex; gap: 4px; width: 582px; padding-left: 3px; color: #2d7cc4; }
.toggles svg { width: 11px; height: 11px; }
.toggles .grey { color: #999; }
.tl-zoom { display: flex; align-items: center; gap: 6px; }
.tl-zoom svg { width: 16px; height: 8px; fill: #bbb; }
.tl-zoom input { appearance: none; width: 42px; height: 10px; }
.tl-zoom input::-webkit-slider-runnable-track { height: 1px; background: #555; }
.tl-zoom input::-webkit-slider-thumb { appearance: none; width: 9px; height: 9px; margin-top: -4px; border: 2px solid #aaa; border-radius: 50%; background: var(--bg); }

/* Taskbar */
.taskbar { position: relative; display: flex; height: 33px; background: #000; }
.app-btn { position: relative; display: grid; place-items: center; width: 40px; margin-right: 1px; border-bottom: 2px solid transparent; }
.app-btn:first-of-type { margin-left: -3px; }
.app-btn svg { width: 14px; height: 14px; }
.app-btn.large svg { width: 19px; height: 19px; }
.app-btn.edge svg { width: 17px; height: 17px; }
.app-btn.open { background: linear-gradient(#edf2a0, #edf2a0) no-repeat center bottom / 34px 2px border-box; }
.app-btn.current { margin-left: 2px; background: #343434; border-color: #edf2a0; }
.current span { width: 19px; height: 18px; border: 1px solid #a277db; background: #200640; color: #c19cf2; font: bold 10px/16px "Open Sans", sans-serif; }
.ghost { position: absolute; left: 34px; top: 3px; display: flex; color: #202020; font: 14px/18px Roboto, sans-serif; }
.ghost svg { width: 100px; height: 20px; fill: #202020; }
.ghost span { margin-left: 18px; }
.tray { display: flex; align-items: center; gap: 7px; margin-left: auto; padding-right: 21px; }
.tray svg { width: 12px; height: 12px; fill: none; stroke: #ddd; stroke-width: 1.200; }
.tray .solid { fill: #ddd; stroke: none; }
.tray .t-chev { margin-right: 3px; }
.tray .t-bat, .tray .t-vol { width: 14px; }
.tray .t-vol { margin-left: -3px; }
.tray .t-key { width: 20px; margin-left: -2px; }
.tray .t-note { width: 14px; height: 14px; margin-left: 6px; }
.tray time { color: #eee; text-align: center; font: 10px/15px "Open Sans", "Noto Sans", sans-serif; }
```
